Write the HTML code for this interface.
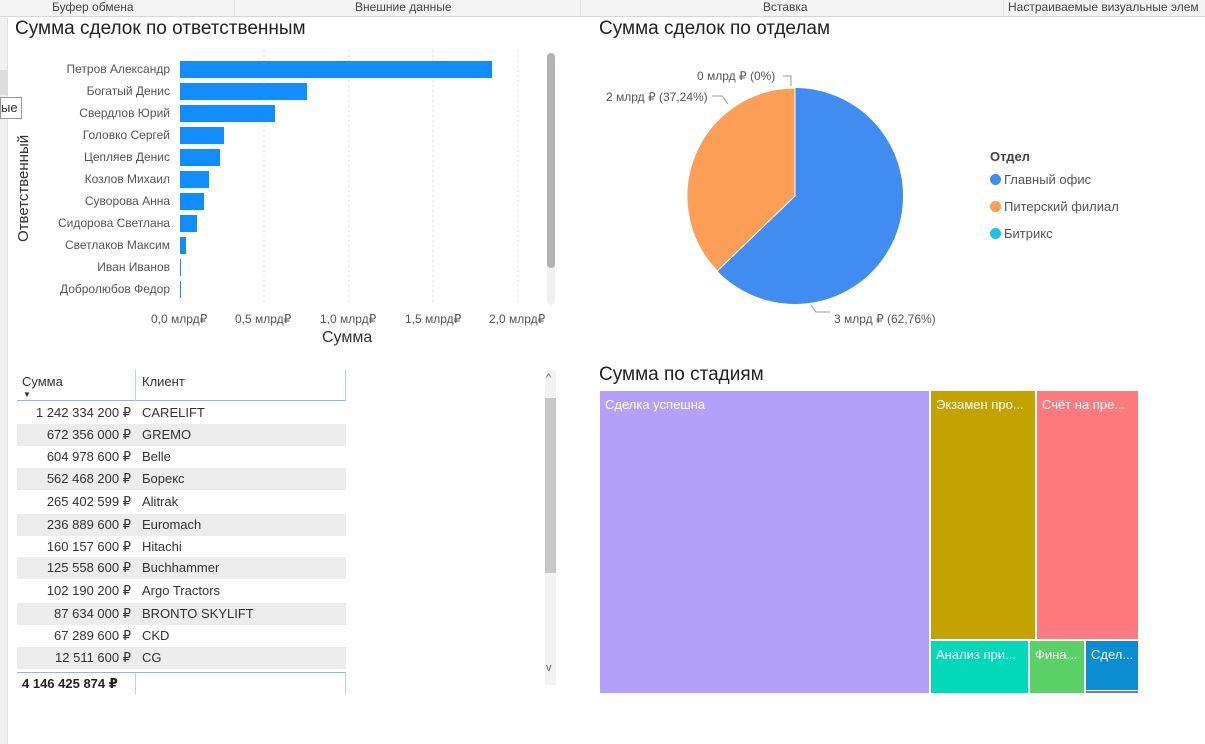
<!DOCTYPE html>
<html><head><meta charset="utf-8"><style>
*{margin:0;padding:0;box-sizing:border-box}
body{width:1205px;height:744px;overflow:hidden;background:#fff;font-family:"Segoe UI","Liberation Sans","DejaVu Sans",sans-serif;position:relative;color:#333}
.a{position:absolute}
.top{left:0;top:0;width:1205px;height:17px;background:#f3f3f3;border-bottom:1px solid #d6d6d6;font-size:12px;color:#444}
.top span{position:absolute;top:0;line-height:15px}
.h{font-size:19px;color:#222;font-family:"Liberation Sans",sans-serif}
.lbl{font-size:12px;color:#555;text-align:right;width:160px;left:10px}
.bar{background:#118dff;left:180px;height:17px}
.ax{font-size:12px;color:#555}
.row{left:17px;width:329px;height:22px;font-size:13px;color:#333;line-height:22px}
.row .n{position:absolute;left:0;width:114px;text-align:right}
.row .c{position:absolute;left:125px}
.g{background:#ececec}
.t{font-size:13px;color:#fff;padding:6px 5px;overflow:hidden;white-space:nowrap}
.dot{display:inline-block;width:11px;height:11px;border-radius:50%;vertical-align:-1px;margin-right:3px}
</style></head><body>
<div class="a top">
<span style="left:52px">Буфер обмена</span><span style="left:355px">Внешние данные</span><span style="left:763px">Вставка</span><span style="left:1008px">Настраиваемые визуальные элем</span>
<div class="a" style="left:234px;top:0;width:1px;height:17px;background:#ddd"></div>
<div class="a" style="left:580px;top:0;width:1px;height:17px;background:#ddd"></div>
<div class="a" style="left:1003px;top:0;width:1px;height:17px;background:#ddd"></div>
</div>
<div class="a" style="left:0;top:18px;width:8px;height:726px;background:#f0f0f0;border-right:1px solid #e0e0e0"></div>
<div class="a" style="left:0;top:70px;width:8px;height:25px;background:#ddd"></div>
<div class="a h" style="left:15px;top:18px">Сумма сделок по ответственным</div>
<div class="a" style="left:15px;top:242px;transform:rotate(-90deg);transform-origin:left top;font-size:15px;color:#333;font-family:'Liberation Sans',sans-serif">Ответственный</div>
<div class="a" style="left:0;top:97px;width:22px;height:22px;background:#fff;border:1px solid #999;font-size:13px;line-height:20px">ые</div>
<svg class="a" style="left:0;top:0" width="600" height="340">
<g stroke="#ddd" stroke-dasharray="2,3"><line x1="264" y1="50" x2="264" y2="305"/><line x1="349" y1="50" x2="349" y2="305"/><line x1="433" y1="50" x2="433" y2="305"/><line x1="518" y1="50" x2="518" y2="305"/></g>
<rect x="547" y="53" width="8" height="252" rx="4" fill="#f0f0f0"/><rect x="547" y="53" width="8" height="215" rx="4" fill="#b3b3b3"/>
</svg>
<div class="a lbl" style="top:62px">Петров Александр</div><div class="a bar" style="top:61px;width:312px"></div>
<div class="a lbl" style="top:84px">Богатый Денис</div><div class="a bar" style="top:83px;width:127px"></div>
<div class="a lbl" style="top:106px">Свердлов Юрий</div><div class="a bar" style="top:105px;width:95px"></div>
<div class="a lbl" style="top:128px">Головко Сергей</div><div class="a bar" style="top:127px;width:44px"></div>
<div class="a lbl" style="top:150px">Цепляев Денис</div><div class="a bar" style="top:149px;width:40px"></div>
<div class="a lbl" style="top:172px">Козлов Михаил</div><div class="a bar" style="top:171px;width:29px"></div>
<div class="a lbl" style="top:194px">Суворова Анна</div><div class="a bar" style="top:193px;width:24px"></div>
<div class="a lbl" style="top:216px">Сидорова Светлана</div><div class="a bar" style="top:215px;width:17px"></div>
<div class="a lbl" style="top:238px">Светлаков Максим</div><div class="a bar" style="top:237px;width:6px"></div>
<div class="a lbl" style="top:260px">Иван Иванов</div><div class="a bar" style="top:259px;width:1px"></div>
<div class="a lbl" style="top:282px">Добролюбов Федор</div><div class="a bar" style="top:281px;width:1px"></div>
<div class="a ax" style="left:151px;top:312px">0,0 млрд₽</div>
<div class="a ax" style="left:235px;top:312px">0,5 млрд₽</div>
<div class="a ax" style="left:320px;top:312px">1,0 млрд₽</div>
<div class="a ax" style="left:405px;top:312px">1,5 млрд₽</div>
<div class="a ax" style="left:489px;top:312px">2,0 млрд₽</div>
<div class="a" style="left:322px;top:329px;font-size:16px;color:#333;font-family:'Liberation Sans',sans-serif">Сумма</div>

<div class="a" style="left:17px;top:370px;width:329px;height:31px;border-bottom:1px solid #8bbbd6;font-size:13px">
<span class="a" style="left:5px;top:4px">Сумма</span><span class="a" style="left:125px;top:4px">Клиент</span>
<span class="a" style="left:6px;top:20px;font-size:8px">▼</span></div>
<div class="a" style="left:135px;top:370px;width:1px;height:31px;background:#b8d4e4"></div>
<div class="a" style="left:345px;top:370px;width:1px;height:31px;background:#b8d4e4"></div>
<div class="a row" style="top:402px"><span class="n">1 242 334 200 ₽</span><span class="c">CARELIFT</span></div>
<div class="a row g" style="top:424px"><span class="n">672 356 000 ₽</span><span class="c">GREMO</span></div>
<div class="a row" style="top:446px"><span class="n">604 978 600 ₽</span><span class="c">Belle</span></div>
<div class="a row g" style="top:468px"><span class="n">562 468 200 ₽</span><span class="c">Борекс</span></div>
<div class="a row" style="top:491px"><span class="n">265 402 599 ₽</span><span class="c">Alitrak</span></div>
<div class="a row g" style="top:514px"><span class="n">236 889 600 ₽</span><span class="c">Euromach</span></div>
<div class="a row" style="top:536px"><span class="n">160 157 600 ₽</span><span class="c">Hitachi</span></div>
<div class="a row g" style="top:557px"><span class="n">125 558 600 ₽</span><span class="c">Buchhammer</span></div>
<div class="a row" style="top:580px"><span class="n">102 190 200 ₽</span><span class="c">Argo Tractors</span></div>
<div class="a row g" style="top:603px"><span class="n">87 634 000 ₽</span><span class="c">BRONTO SKYLIFT</span></div>
<div class="a row" style="top:625px"><span class="n">67 289 600 ₽</span><span class="c">CKD</span></div>
<div class="a row g" style="top:647px"><span class="n">12 511 600 ₽</span><span class="c">CG</span></div>
<div class="a" style="left:17px;top:672px;width:329px;height:1px;background:#8bbbd6"></div>
<div class="a" style="left:22px;top:676px;font-size:13px;font-weight:bold;color:#222">4 146 425 874 ₽</div>
<div class="a" style="left:135px;top:673px;width:1px;height:21px;background:#b8d4e4"></div>
<div class="a" style="left:345px;top:673px;width:1px;height:21px;background:#b8d4e4"></div>
<div class="a" style="left:545px;top:370px;width:11px;height:315px;background:#f3f3f3"></div>
<div class="a" style="left:545px;top:398px;width:11px;height:175px;background:#c8c8c8"></div>
<div class="a" style="left:546px;top:372px;font-size:11px;color:#666">^</div>
<div class="a" style="left:546px;top:662px;font-size:11px;color:#666">v</div>

<div class="a h" style="left:599px;top:18px">Сумма сделок по отделам</div>
<svg class="a" style="left:590px;top:60px" width="400" height="280">
<circle cx="205" cy="136" r="108" fill="#418cf0"/>
<path d="M205,136 L205,28 A108,108 0 0,0 127.3,211 Z" fill="#fc9e56" stroke="#fff" stroke-width="1"/>
<g stroke="#999" fill="none"><path d="M193,16 H201 V26"/><path d="M122,36 H132 L138,44"/><path d="M221,245 L226,252 H240"/></g>
<g font-size="12" fill="#555" font-family="Liberation Sans,sans-serif">
<text x="107" y="20">0 млрд ₽ (0%)</text>
<text x="16" y="41">2 млрд ₽ (37,24%)</text>
<text x="244" y="263">3 млрд ₽ (62,76%)</text></g>
</svg>
<div class="a" style="left:990px;top:149px;font-size:13px;font-weight:bold;color:#444">Отдел</div>
<div class="a" style="left:990px;top:172px;font-size:13px;color:#555"><span class="dot" style="background:#418cf0"></span>Главный офис</div>
<div class="a" style="left:990px;top:199px;font-size:13px;color:#555"><span class="dot" style="background:#fc9e56"></span>Питерский филиал</div>
<div class="a" style="left:990px;top:226px;font-size:13px;color:#555"><span class="dot" style="background:#1ac0e8"></span>Битрикс</div>

<div class="a h" style="left:599px;top:364px">Сумма по стадиям</div>
<div class="a t" style="left:600px;top:391px;width:329px;height:302px;background:#b3a0fb">Сделка успешна</div>
<div class="a t" style="left:931px;top:391px;width:104px;height:248px;background:#c4a300">Экзамен про...</div>
<div class="a t" style="left:1037px;top:391px;width:101px;height:248px;background:#fd7b7e">Счёт на пре...</div>
<div class="a t" style="left:931px;top:641px;width:97px;height:52px;background:#01d9b9">Анализ при...</div>
<div class="a t" style="left:1030px;top:641px;width:54px;height:52px;background:#5ad167">Фина...</div>
<div class="a t" style="left:1086px;top:641px;width:52px;height:49px;background:#0b8ed1">Сдел...</div>
<div class="a" style="left:1086px;top:691px;width:52px;height:2px;background:#6a7ad0"></div>
</body></html>
